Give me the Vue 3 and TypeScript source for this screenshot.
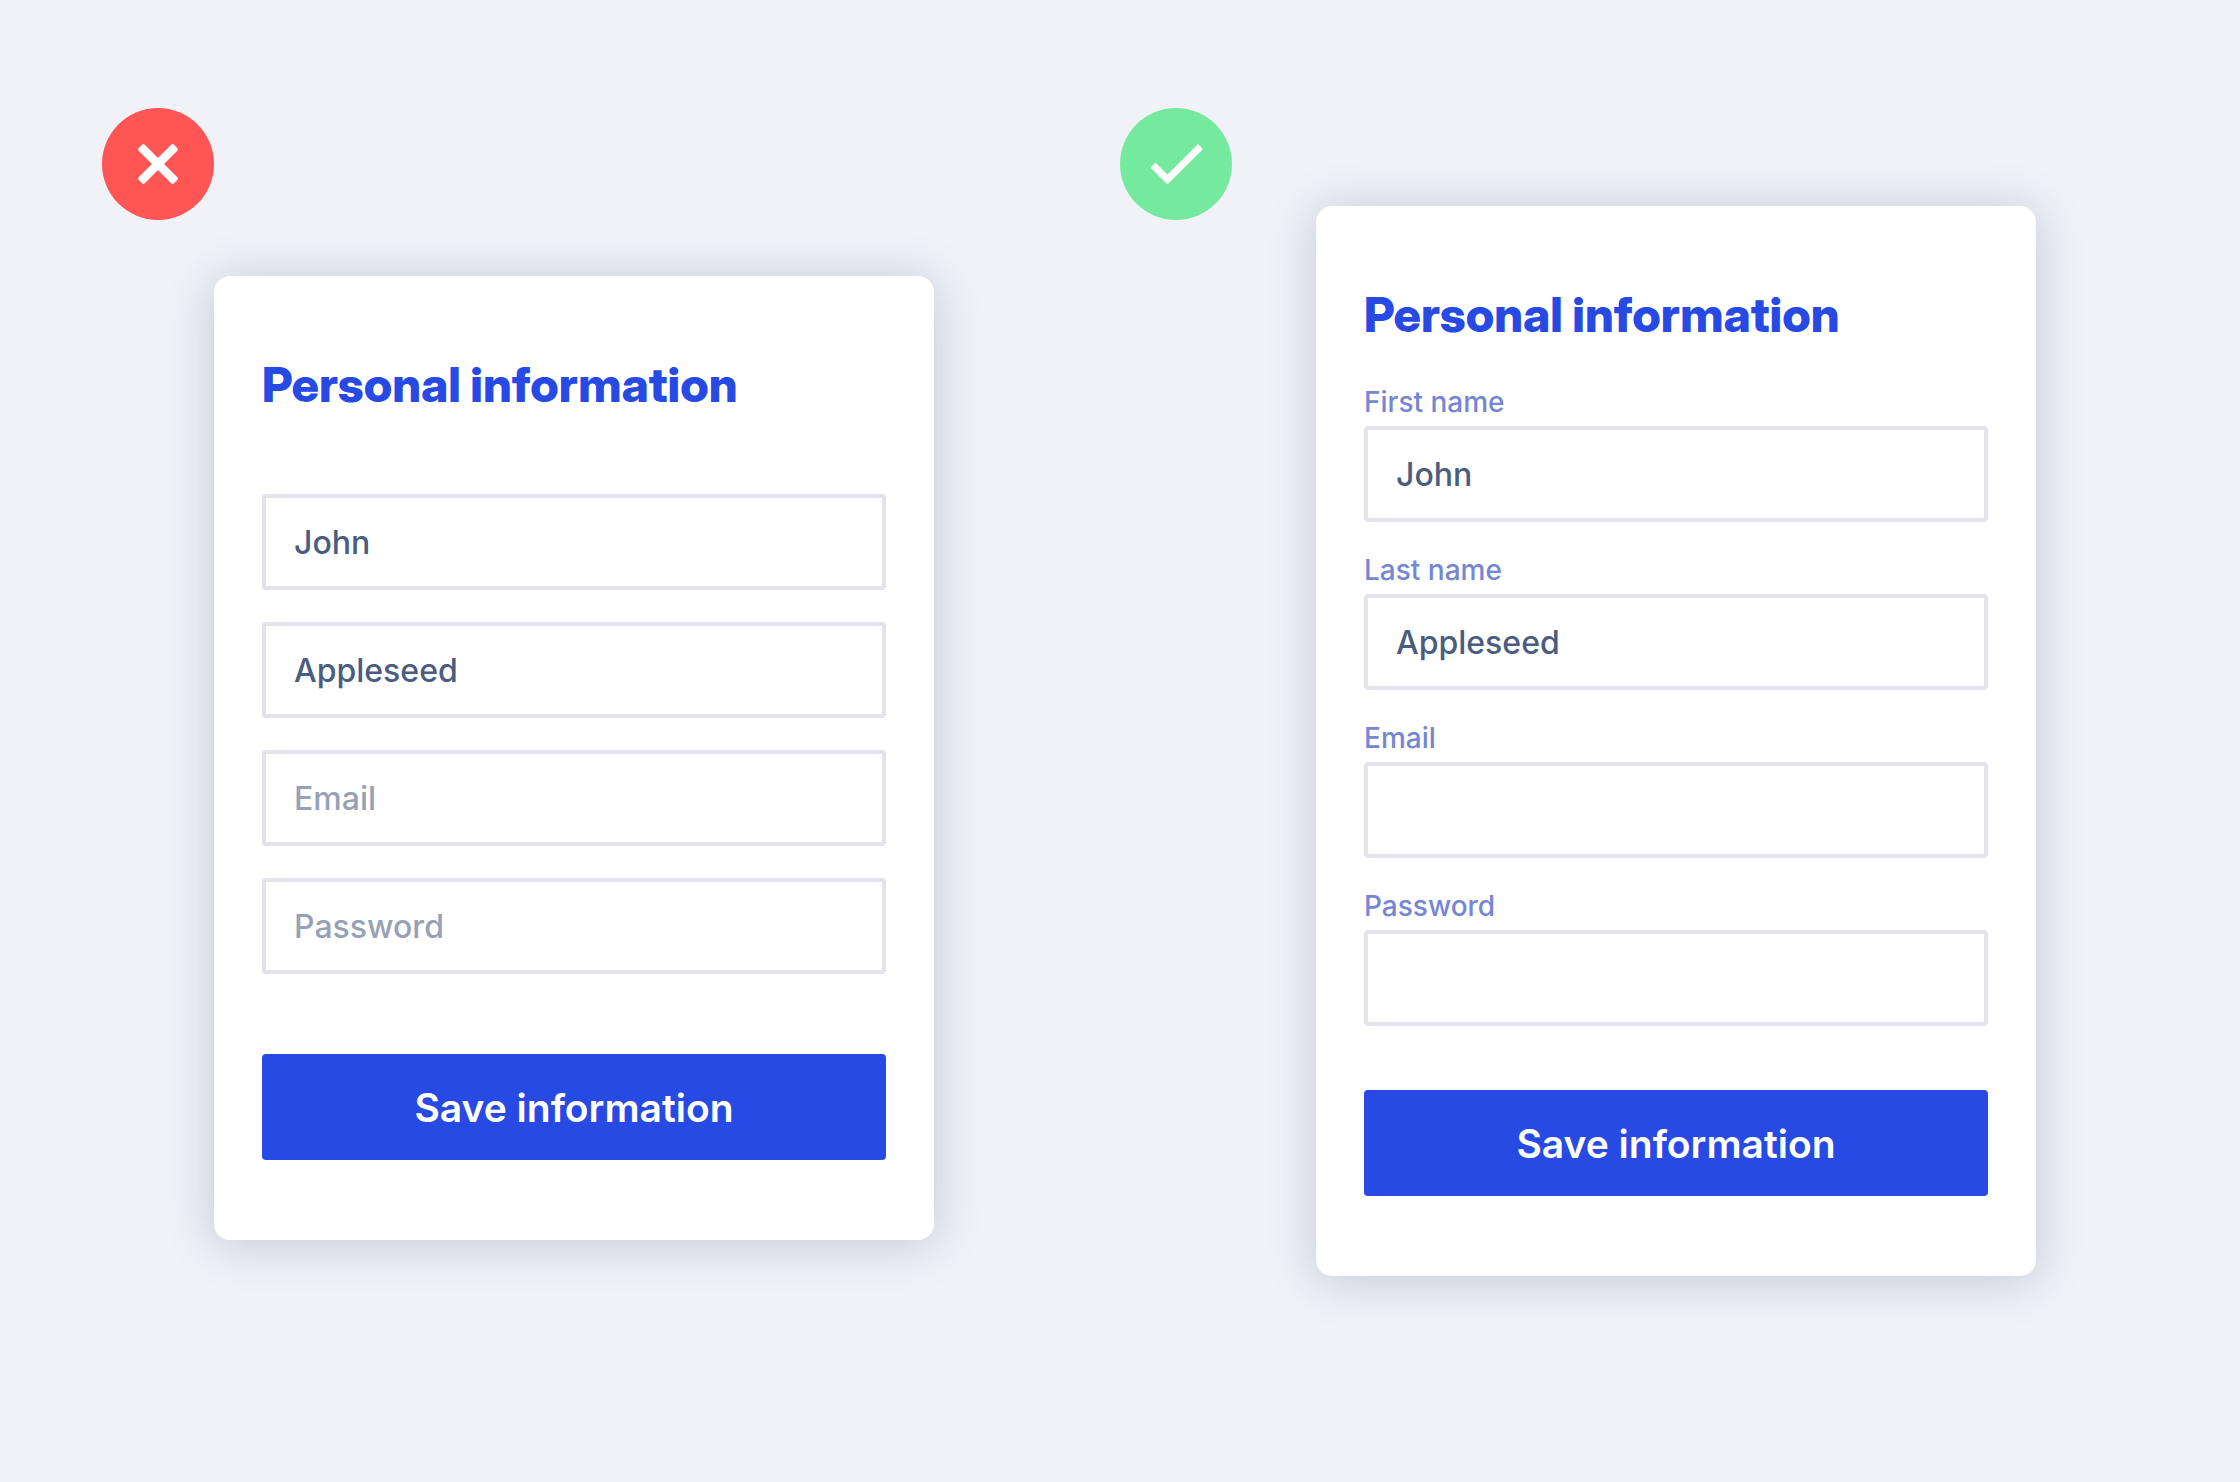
<script setup lang="ts">
import { reactive } from 'vue'

interface Field {
  id: string
  label: string
  type: string
  value: string
}

interface Example {
  id: string
  kind: 'bad' | 'good'
  fields: Field[]
}

const makeFields = (prefix: string): Field[] => [
  { id: `${prefix}-first`, label: 'First name', type: 'text', value: 'John' },
  { id: `${prefix}-last`, label: 'Last name', type: 'text', value: 'Appleseed' },
  { id: `${prefix}-email`, label: 'Email', type: 'email', value: '' },
  { id: `${prefix}-password`, label: 'Password', type: 'password', value: '' },
]

const examples = reactive<Example[]>([
  { id: 'placeholders', kind: 'bad', fields: makeFields('placeholders') },
  { id: 'labels', kind: 'good', fields: makeFields('labels') },
])
</script>

<template>
  <main class="page">
    <section v-for="example in examples" :key="example.id" class="example" :class="example.kind">
      <svg class="badge" viewBox="0 0 112 112" aria-hidden="true">
        <circle class="disc" cx="56" cy="56" r="56" />
        <g v-if="example.kind === 'bad'" fill="#fff">
          <rect x="31" y="51.7" width="50" height="8.6" rx="2" transform="rotate(45 56 56)" />
          <rect x="31" y="51.7" width="50" height="8.6" rx="2" transform="rotate(-45 56 56)" />
        </g>
        <path
          v-else
          d="M35.5 55.9 47.5 67.9 78 37.4 81.6 41 47.5 75.1 31.9 59.5Z"
          fill="#fff"
          stroke="#fff"
          stroke-width="2"
          stroke-linejoin="round"
        />
      </svg>

      <form class="card" @submit.prevent>
        <h2 class="title">Personal information</h2>
        <div class="fields">
          <div v-for="field in example.fields" :key="field.id" class="field">
            <label v-if="example.kind === 'good'" class="label" :for="field.id">{{ field.label }}</label>
            <input
              :id="field.id"
              v-model="field.value"
              class="input"
              :type="field.type"
              :placeholder="example.kind === 'bad' ? field.label : undefined"
              :aria-label="example.kind === 'bad' ? field.label : undefined"
            />
          </div>
        </div>
        <button class="save" type="submit">Save information</button>
      </form>
    </section>
  </main>
</template>

<style>
body {
  background: #f0f2f8;
}
</style>

<style scoped>
.page {
  display: grid;
  grid-template-columns: 1fr 1fr;
  align-items: start;
  box-sizing: border-box;
  min-height: 100vh;
  padding: 108px 0;
  font-family: Inter, 'Liberation Sans', sans-serif;
}

.example {
  display: flex;
  align-items: flex-start;
}

.example.bad {
  padding-left: 102px;
}

.badge {
  flex: none;
  width: 112px;
  height: 112px;
}

.bad .disc {
  fill: #ff5555;
}

.good .disc {
  fill: #75e99d;
}

.card {
  flex: 0 1 720px;
  display: flex;
  flex-direction: column;
  box-sizing: border-box;
  min-width: 0;
  padding: 80px 48px;
  border-radius: 16px;
  background: #fff;
  box-shadow: 0 4px 48px rgba(30, 45, 90, 0.22);
}

.bad .card {
  margin-top: 168px;
}

.good .card {
  margin-top: 98px;
  margin-left: 84px;
}

.title {
  margin: 0;
  color: #274ae4;
  font-family: 'Inter Display', Inter, 'Liberation Sans', sans-serif;
  font-size: 48px;
  font-weight: 800;
  line-height: 58px;
}

.fields {
  display: flex;
  flex-direction: column;
}

.bad .fields {
  gap: 32px;
  margin: 80px 0;
}

.good .fields {
  gap: 24px;
  margin: 34px 0 64px;
}

.field {
  display: flex;
  flex-direction: column;
}

.label {
  color: #7486d4;
  font-size: 28px;
  font-weight: 500;
  line-height: 48px;
}

.input {
  box-sizing: border-box;
  width: 100%;
  height: 96px;
  padding: 0 28px;
  border: 4px solid #e3e4eb;
  border-radius: 4px;
  outline: none;
  background: #fff;
  color: #4a5c80;
  font-family: inherit;
  font-size: 32px;
  font-weight: 500;
}

.input::placeholder {
  color: #97a1b6;
  opacity: 1;
}

.save {
  height: 106px;
  padding: 0;
  border: 0;
  border-radius: 4px;
  background: #274ae4;
  color: #fff;
  font-family: inherit;
  font-size: 39px;
  font-weight: 600;
  cursor: pointer;
}
</style>
